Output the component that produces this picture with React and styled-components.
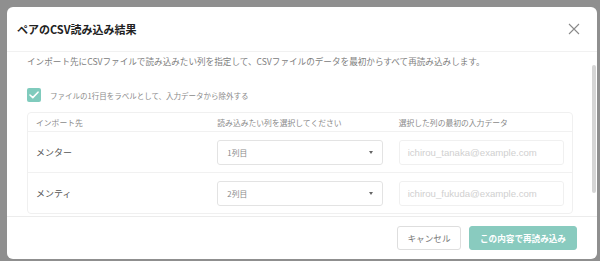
import React from "react";
import styled, { createGlobalStyle } from "styled-components";

const GlobalStyle = createGlobalStyle`
  html, body {
    margin: 0;
    padding: 0;
    background: #8f8f8f;
  }
  body {
    font-family: "Noto Sans CJK JP", "Noto Sans", sans-serif;
    -webkit-font-smoothing: antialiased;
  }
`;

const rows = [
  { label: "メンター", column: "1列目", sample: "ichirou_tanaka@example.com" },
  { label: "メンティ", column: "2列目", sample: "ichirou_fukuda@example.com" },
];

const App = () => {
  return (
    <>
      <GlobalStyle />
      <StPage>
        <StModal>
          <StHeader>
            <StTitle>ペアのCSV読み込み結果</StTitle>
            <StClose aria-label="閉じる">
              <svg width="12" height="12" viewBox="0 0 12 12">
                <path d="M1 1 L11 11 M11 1 L1 11" stroke="#8a8a8a" strokeWidth="1.1" fill="none" />
              </svg>
            </StClose>
          </StHeader>

          <StBody>
            <StDesc>
              インポート先にCSVファイルで読み込みたい列を指定して、CSVファイルのデータを最初からすべて再読み込みします。
            </StDesc>

            <StCheckRow>
              <StCheckbox>
                <svg width="10" height="8" viewBox="0 0 10 8">
                  <path d="M1 4 L3.8 6.6 L9 1.2" stroke="#fff" strokeWidth="1.6" fill="none" strokeLinecap="round" strokeLinejoin="round" />
                </svg>
              </StCheckbox>
              <span>ファイルの1行目をラベルとして、入力データから除外する</span>
            </StCheckRow>

            <StTable>
              <StRow $head>
                <StCell>インポート先</StCell>
                <StCell>読み込みたい列を選択してください</StCell>
                <StCell>選択した列の最初の入力データ</StCell>
              </StRow>
              {rows.map((r) => (
                <StRow key={r.label}>
                  <StCell>{r.label}</StCell>
                  <StCell>
                    <StSelect>
                      <span>{r.column}</span>
                      <StCaret />
                    </StSelect>
                  </StCell>
                  <StCell>
                    <StInput>{r.sample}</StInput>
                  </StCell>
                </StRow>
              ))}
            </StTable>
          </StBody>

          <StFooter>
            <StButton>キャンセル</StButton>
            <StButton $primary>この内容で再読み込み</StButton>
          </StFooter>

          <StScrollThumb />
        </StModal>
      </StPage>
    </>
  );
};

const StPage = styled.div`
  width: 600px;
  height: 261px;
  box-sizing: border-box;
  padding: 7px 3px 2px 7px;
`;

const StModal = styled.div`
  position: relative;
  width: 590px;
  height: 252px;
  background: #fff;
  border-radius: 6px;
  display: flex;
  flex-direction: column;
  overflow: hidden;
`;

const StHeader = styled.div`
  height: 45px;
  flex-shrink: 0;
  box-sizing: border-box;
  display: flex;
  align-items: center;
  justify-content: space-between;
  padding: 0 16px 0 10px;
  border-bottom: 1px solid #f1f1f1;
`;

const StTitle = styled.h1`
  margin: 0;
  font-size: 11px;
  font-weight: 700;
  color: #222;
`;

const StClose = styled.div`
  width: 14px;
  height: 14px;
  display: flex;
  align-items: center;
  justify-content: center;
  cursor: pointer;
`;

const StBody = styled.div`
  height: 164px;
  flex-shrink: 0;
  box-sizing: border-box;
  overflow: hidden;
  padding: 2px 20px 0 20px;
`;

const StDesc = styled.p`
  margin: 0;
  font-size: 8.6px;
  line-height: 14px;
  color: #808080;
  white-space: nowrap;
`;

const StCheckRow = styled.label`
  display: flex;
  align-items: center;
  gap: 9px;
  margin-top: 20px;
  font-size: 7.5px;
  color: #8a8a8a;
`;

const StCheckbox = styled.div`
  width: 14px;
  height: 14px;
  border-radius: 2px;
  background: #80cbbd;
  display: flex;
  align-items: center;
  justify-content: center;
`;

const StTable = styled.div`
  margin-top: 10px;
  width: 546px;
  border: 1px solid #f0f0f0;
  border-radius: 4px;
  box-sizing: border-box;
`;

const StRow = styled.div`
  display: grid;
  grid-template-columns: repeat(3, 1fr);
  box-sizing: border-box;
  height: ${(p) => (p.$head ? "18px" : "41px")};
  align-items: center;
  border-top: ${(p) => (p.$head ? "none" : "1px solid #f1f1f1")};
  font-size: ${(p) => (p.$head ? "7.8px" : "9px")};
  color: ${(p) => (p.$head ? "#8a8a8a" : "#555")};
`;

const StCell = styled.div`
  padding: 0 8px;
  white-space: nowrap;
`;

const StSelect = styled.div`
  height: 25px;
  box-sizing: border-box;
  border: 1px solid #e3e3e3;
  border-radius: 3px;
  display: flex;
  align-items: center;
  justify-content: space-between;
  padding: 0 9px;
  font-size: 7.8px;
  color: #8a8a8a;
`;

const StCaret = styled.span`
  width: 0;
  height: 0;
  border-left: 2.5px solid transparent;
  border-right: 2.5px solid transparent;
  border-top: 3px solid #666;
`;

const StInput = styled.div`
  height: 25px;
  box-sizing: border-box;
  border: 1px solid #f0f0f0;
  border-radius: 3px;
  display: flex;
  align-items: center;
  padding: 0 8px;
  font-family: "Liberation Sans", Arial, sans-serif;
  font-size: 9.6px;
  color: #d0d0d0;
`;

const StFooter = styled.div`
  flex: 1;
  display: flex;
  align-items: center;
  justify-content: flex-end;
  gap: 8px;
  padding: 0 20px;
  border-top: 1px solid #ececec;
`;

const StButton = styled.button`
  height: 24px;
  box-sizing: border-box;
  padding: 0;
  width: ${(p) => (p.$primary ? "108px" : "64px")};
  border-radius: 3px;
  border: 1px solid ${(p) => (p.$primary ? "#89cbbf" : "#dedede")};
  background: ${(p) => (p.$primary ? "#89cbbf" : "#fff")};
  color: ${(p) => (p.$primary ? "#fff" : "#777")};
  font-family: "Noto Sans CJK JP", sans-serif;
  font-size: 8.6px;
  font-weight: ${(p) => (p.$primary ? 700 : 400)};
  cursor: pointer;
`;

const StScrollThumb = styled.div`
  position: absolute;
  right: 1px;
  top: 58px;
  width: 4px;
  height: 128px;
  border-radius: 2px;
  background: #d5d5d5;
`;

export default App;
